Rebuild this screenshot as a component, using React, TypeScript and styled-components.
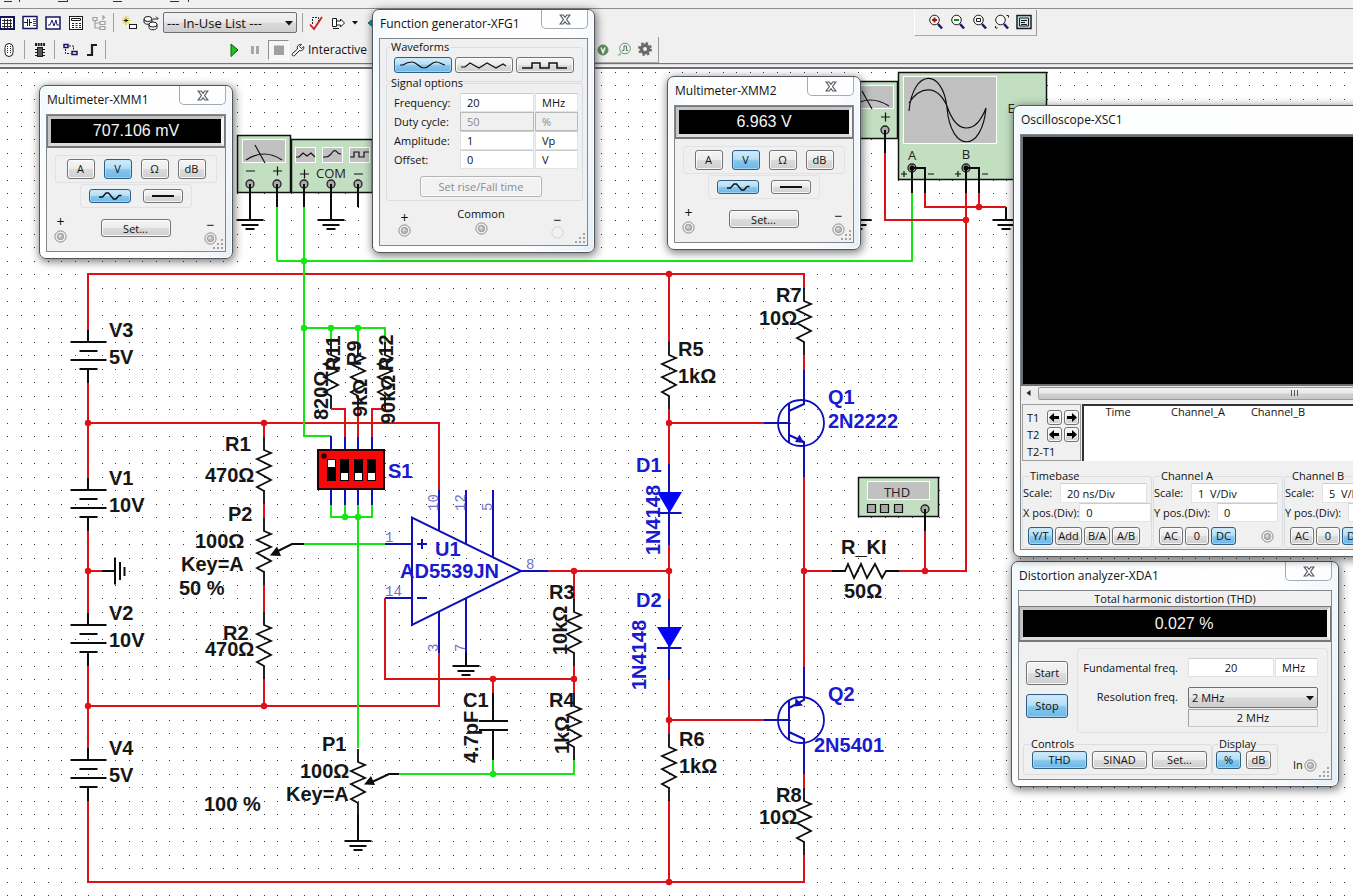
import React from 'react';
import styled, { createGlobalStyle, css } from 'styled-components';

const GlobalStyle = createGlobalStyle`
  *, *::before, *::after { box-sizing: border-box; }
  html, body, #root { height: 100%; margin: 0; }
  body { overflow: hidden; background: #f0f0f0; color: #111; font-family: "Open Sans", "Noto Sans", sans-serif; font-size: 11px; line-height: 14px; }
  button, input, select { font: inherit; color: inherit; }
`;

const RED = '#dd1216';
const GREEN = '#14e614';
const BLUE = '#1010b8';
const LABEL_BLUE = '#1a1ad0';
const INK = '#0c0c0c';

/* ---------- page frame ---------- */

const Desktop = styled.div`
  position: relative;
  display: flex;
  flex-direction: column;
  height: 100vh;
  min-width: 0;
  overflow: hidden;
`;

const MenuEdge = styled.div`
  height: 9px;
  flex: none;
  background: #f1f1f1;
  border-bottom: 1px solid #8e8e8e;
  svg { display: block; }
`;

const ToolArea = styled.header`
  flex: none;
  display: flex;
  flex-direction: column;
  height: 60px;
  border-bottom: 2px solid #6e6e74;
  background: #f0f0f0;
`;

const ToolRow = styled.div`
  display: flex;
  align-items: center;
  height: 27px;
  flex: none;
`;

const ToolRule = styled.div`
  height: 2px;
  background: #73737a;
  border-bottom: 1px solid #d8d8d8;
`;

const ToolGroup = styled.div<{ $start?: number; $gap?: number; $boxed?: boolean; $pad?: string }>`
  display: flex;
  align-items: center;
  gap: ${p => p.$gap ?? 7}px;
  height: 26px;
  flex: none;
  margin-left: ${p => p.$start ?? 0}px;
  padding: ${p => p.$pad ?? '0'};
  ${p => p.$boxed && css`
    border-right: 1px solid #9a9a9a;
    border-bottom: 1px solid #a8a8a8;
    border-left: 1px solid #fff;
  `}
`;

const ToolButton = styled.button<{ $pressed?: boolean; $w?: number }>`
  display: flex;
  align-items: center;
  justify-content: center;
  width: ${p => p.$w ?? 16}px;
  height: 20px;
  flex: none;
  padding: 0;
  border: 0;
  background: none;
  svg { flex: none; }
  ${p => p.$pressed && css`
    border: 1px solid #8d8d8d;
    border-right-color: #fff;
    border-bottom-color: #fff;
    background: #f6f6f6;
  `}
`;

const Divider = styled.span<{ $mx?: number }>`
  width: 1px;
  height: 19px;
  flex: none;
  margin: 0 ${p => p.$mx ?? 6}px;
  background: #a0a0a0;
`;

const SelectBox = styled.span<{ $w: number; $h: number; $size?: number }>`
  position: relative;
  display: inline-flex;
  flex: none;
  width: ${p => p.$w}px;
  height: ${p => p.$h}px;
  select {
    appearance: none;
    width: 100%;
    height: 100%;
    padding: 0 3px;
    border: 1px solid #707070;
    border-radius: 2px;
    background: linear-gradient(#f2f2f2, #ebebeb 48%, #dadada 52%, #cfcfcf);
    font-size: ${p => p.$size ?? 11}px;
  }
  svg { position: absolute; right: 4px; top: 50%; margin-top: -2px; pointer-events: none; }
`;

const RunLabel = styled.button`
  display: flex;
  align-items: center;
  gap: 3px;
  padding: 0;
  border: 0;
  background: none;
  font-size: 12px;
`;

const Workspace = styled.main`
  flex: 1;
  min-height: 0;
  background: #fff;
  overflow: hidden;
  svg { display: block; width: 100%; height: 100%; }
`;

/* ---------- instrument windows ---------- */

const Frame = styled.section<{ $x: number; $y: number; $w: number }>`
  position: absolute;
  left: ${p => p.$x}px;
  top: ${p => p.$y}px;
  width: ${p => p.$w}px;
  padding: 0 6px 6px;
  border: 1px solid #50565c;
  border-radius: 7px;
  background: linear-gradient(100deg, #f0f9fd 0, #fdfefe 12%, #ffffff 70%, #f1f6fb 92%, #e2eef5);
  box-shadow: inset 0 0 0 1px #fff, 1px 2px 9px 1px rgba(0, 0, 0, 0.5);
`;

const TitleBar = styled.header`
  display: flex;
  justify-content: space-between;
  align-items: flex-start;
  height: 28px;
  h2 { margin: 0; padding: 5px 0 0 1px; font-size: 12px; line-height: 18px; font-weight: 400; white-space: nowrap; }
`;

const CloseButton = styled.button`
  display: flex;
  align-items: center;
  justify-content: center;
  width: 47px;
  height: 19px;
  padding: 0;
  border: 1px solid #a3abb5;
  border-top: 0;
  border-radius: 0 0 5px 5px;
  background: rgba(255, 255, 255, 0.75);
`;

const Body = styled.div<{ $h: number }>`
  position: relative;
  height: ${p => p.$h}px;
  border: 1px solid #83878b;
  background: #f0f0f0;
  overflow: hidden;
`;

const Readout = styled.output<{ $h: number; $shift?: number }>`
  display: flex;
  align-items: center;
  justify-content: center;
  height: ${p => p.$h}px;
  padding-left: ${p => p.$shift ?? 0}px;
  border: 4px solid #dcdcdc;
  border-top-color: #c4c4c4;
  border-left-color: #c4c4c4;
  border-right-color: #f4f4f4;
  outline: 1px solid #77777c;
  outline-offset: -1px;
  box-shadow: 0 1px 0 #77777c;
  background: #000;
  color: #f4f4f4;
  font: 16px "Liberation Sans", Arial, sans-serif;
`;

const Btn = styled.button<{ $w: number; $h: number; $on?: boolean }>`
  display: flex;
  align-items: center;
  justify-content: center;
  flex: none;
  width: ${p => p.$w}px;
  height: ${p => p.$h}px;
  padding: 0;
  border: 1px solid ${p => (p.$on ? '#2f5f85' : '#747474')};
  border-radius: 3px;
  background: ${p => (p.$on
    ? 'linear-gradient(#d3ebf9, #b5def5 45%, #85c6ec 55%, #6db8e6)'
    : 'linear-gradient(#f5f5f5, #ececec 48%, #dcdcdc 52%, #cfcfcf)')};
  box-shadow: inset 0 0 0 1px ${p => (p.$on ? 'rgba(190,228,250,.6)' : 'rgba(255,255,255,.8)')};
  white-space: nowrap;
  &:disabled { color: #8b8b8b; background: #f2f2f2; border-color: #b4b4b4; }
`;

const Group = styled.div<{ $w: number; $h: number; $gap: number; $mt: number }>`
  display: flex;
  align-items: center;
  justify-content: center;
  gap: ${p => p.$gap}px;
  width: ${p => p.$w}px;
  height: ${p => p.$h}px;
  margin: ${p => p.$mt}px auto 0;
  border: 1px solid #dfe2e6;
  border-radius: 3px;
`;

const Field = styled.fieldset<{ $w: number; $h: number; $pad: string; $mt?: number; $indent?: number }>`
  min-width: 0;
  flex: none;
  width: ${p => p.$w}px;
  height: ${p => p.$h}px;
  margin: ${p => p.$mt ?? 0}px 0 0;
  padding: ${p => p.$pad};
  border: 1px solid #d8dde2;
  border-radius: 3px;
  legend { height: 14px; line-height: 14px; margin-left: ${p => p.$indent ?? 3}px; padding: 0 1px; }
`;

const Line = styled.div<{ $gap?: number; $mt?: number; $indent?: number }>`
  display: flex;
  align-items: center;
  gap: ${p => p.$gap ?? 0}px;
  margin-top: ${p => p.$mt ?? 0}px;
  padding-left: ${p => p.$indent ?? 0}px;
`;

const TextBox = styled.input<{ $center?: boolean }>`
  width: 100%;
  min-width: 0;
  height: 100%;
  padding: 0 6px;
  border: 1px solid #e3e3e3;
  border-top-color: #c9ccd0;
  background: #fff;
  text-align: ${p => (p.$center ? 'center' : 'left')};
  &:disabled { color: #8a8a8a; background: #f0f0f0; border-color: #b9b9b9; }
`;

const OptionRow = styled.div`
  display: grid;
  grid-template-columns: 65px 74px 43px;
  column-gap: 1px;
  height: 19px;
  align-items: center;
`;

const Jacks = styled.div<{ $pad: string }>`
  display: flex;
  justify-content: space-between;
  align-items: flex-start;
  padding: ${p => p.$pad};
`;

const JackCol = styled.div<{ $mt?: number; $gap?: number }>`
  display: flex;
  flex-direction: column;
  align-items: center;
  gap: ${p => p.$gap ?? 0}px;
  margin-top: ${p => p.$mt ?? 0}px;
  line-height: 13px;
  svg { display: block; }
`;

const Sign = styled.span`
  font-size: 14px;
`;

const GripMark = styled.svg`
  position: absolute;
  right: 1px;
  bottom: 1px;
`;

const Caption = styled.div`
  height: 15px;
  line-height: 16px;
  text-align: center;
`;

const Split = styled.div`
  display: flex;
  align-items: flex-start;
  padding: 7px 3px 0 7px;
  gap: 9px;
`;

const Stack = styled.div`
  display: flex;
  flex-direction: column;
  gap: 9px;
  padding-top: 13px;
`;

const FreqGrid = styled.div`
  flex: 1;
  height: 85px;
  display: grid;
  grid-template-columns: 1fr 130px;
  grid-template-rows: 29px 22px 18px;
  column-gap: 10px;
  align-items: start;
  padding: 9px 9px 0 0;
  border: 1px solid #dfe2e6;
  border-radius: 3px;
  label { text-align: right; line-height: 19px; }
`;

const FreqPair = styled.div`
  display: grid;
  grid-template-columns: 86px 43px;
  column-gap: 1px;
  height: 19px;
`;

const Resolved = styled.output`
  grid-column: 2;
  height: 18px;
  line-height: 16px;
  border: 1px solid #c8c8c8;
  border-top-color: #a3a3a3;
  border-left-color: #a3a3a3;
  text-align: center;
`;

const FieldRow = styled.div`
  display: flex;
  align-items: flex-start;
  padding: 4px 0 0 4px;
`;

const InPort = styled.div`
  display: flex;
  align-items: center;
  gap: 1px;
  margin: 21px 0 0 15px;
`;

/* ---------- oscilloscope ---------- */

const Screen = styled.div`
  height: 251px;
  border: 2px solid #6c6f73;
  background: #000;
`;

const ScrollTrack = styled.div`
  display: flex;
  align-items: center;
  gap: 7px;
  height: 14px;
  padding-left: 5px;
  background: #ececec;
`;

const ScrollThumb = styled.div`
  display: flex;
  align-items: center;
  justify-content: center;
  width: 513px;
  height: 13px;
  border: 1px solid #9a9a9a;
  border-radius: 2px;
  background: linear-gradient(#f5f5f5, #e6e6e6 48%, #d2d2d2 52%, #c6c6c6);
`;

const CursorRow = styled.div`
  display: flex;
  gap: 1px;
  height: 57px;
  margin: 4px 0 0 1px;
`;

const CursorPanel = styled.div`
  width: 59px;
  flex: none;
  display: grid;
  grid-template-columns: 18px 15px 15px;
  grid-template-rows: 17px 17px 17px;
  column-gap: 2px;
  align-items: center;
  padding: 4px 0 0 4px;
  border: 1px solid #9c9c9c;
  span:last-child { grid-column: 1 / 4; }
`;

const ReadingsPane = styled.div`
  flex: 1;
  background: #fff;
  border-top: 2px solid #333;
  border-left: 2px solid #333;
`;

const Readings = styled.table`
  border-collapse: collapse;
  table-layout: fixed;
  width: 228px;
  th { padding: 0; height: 12px; line-height: 12px; font-weight: 400; text-align: center; }
`;

const ScopeSettings = styled.div`
  display: flex;
  gap: 1px;
  padding: 8px 0 0 1px;
`;

const ScopeLine = styled.div<{ $h: number; $w: number }>`
  display: flex;
  align-items: center;
  justify-content: space-between;
  height: ${p => p.$h}px;
  white-space: nowrap;
  input { width: ${p => p.$w}px; flex: none; }
`;

const ChannelButtons = styled.div`
  display: flex;
  align-items: center;
  gap: 2px;
  margin: 5px 0 0 5px;
  > svg { margin-left: auto; margin-right: 4px; }
`;

/* ---------- small drawings ---------- */

const Caret = () => (
  <svg width="8" height="5" viewBox="0 0 8 5"><path d="M0 0h8L4 4.6z" fill="#111" /></svg>
);

const Jack = ({ faint }: { faint?: boolean }) => (
  <svg width="13" height="13" viewBox="0 0 13 13">
    <circle cx="6.5" cy="6.5" r="5.6" fill="#f2f2f2" stroke={faint ? '#d0d0d0' : '#8a8a8a'} />
    {!faint && <circle cx="6.5" cy="6.5" r="3.2" fill="#b9b9b9" stroke="#8c8c8c" strokeWidth=".8" />}
    {!faint && <circle cx="5.8" cy="5.8" r="1.4" fill="#dcdcdc" />}
  </svg>
);

const Grip = () => (
  <GripMark width="12" height="12" viewBox="0 0 12 12" fill="#a3a3a3">
    <path d="M9 1h2v2H9zM5 5h2v2H5zM9 5h2v2H9zM1 9h2v2H1zM5 9h2v2H5zM9 9h2v2H9z" />
  </GripMark>
);

const CloseMark = () => (
  <svg width="12" height="11" viewBox="0 0 12 11" fill="none">
    <path d="M1.2 1h3L6 3.3 7.8 1h3L7.6 5.500l3.200 4.500h-3L6 7.700 4.200 10h-3l3.200-4.500z" fill="#fff" stroke="#565c66" strokeWidth="1.200" />
  </svg>
);

const Sine = () => (
  <svg width="26" height="10" viewBox="0 0 26 10" fill="none" stroke="#111" strokeWidth="1.400">
    <path d="M2 6h3.500L9 2h2.500l5 6H19l3-3.500h2.500" />
  </svg>
);

interface WindowProps { id: string; title: string; x: number; y: number; w: number; h: number; closable?: boolean; children: React.ReactNode }

const InstrumentWindow = ({ id, title, x, y, w, h, closable = true, children }: WindowProps) => (
  <Frame $x={x} $y={y} $w={w} aria-labelledby={id}>
    <TitleBar>
      <h2 id={id}>{title}</h2>
      {closable && <CloseButton type="button" aria-label="Close"><CloseMark /></CloseButton>}
    </TitleBar>
    <Body $h={h}>{children}</Body>
  </Frame>
);

const Multimeter = ({ name, value, x, y }: { name: string; value: string; x: number; y: number }) => (
  <InstrumentWindow id={name} title={`Multimeter-${name}`} x={x} y={y} w={194} h={138}>
    <Readout $h={32}>{value}</Readout>
    <Group $w={162} $h={28} $gap={9} $mt={8}>
      {['A', 'V', 'Ω', 'dB'].map(u => <Btn key={u} type="button" $w={28} $h={20} $on={u === 'V'}>{u}</Btn>)}
    </Group>
    <Group $w={112} $h={24} $gap={12} $mt={1}>
      <Btn type="button" $w={42} $h={14} $on aria-label="AC"><Sine /></Btn>
      <Btn type="button" $w={40} $h={14} aria-label="DC">
        <svg width="22" height="2"><path d="M0 1h22" stroke="#111" strokeWidth="2" /></svg>
      </Btn>
    </Group>
    <Jacks $pad="7px 8px 0 7px">
      <JackCol $gap={2}><Sign>+</Sign><Jack /></JackCol>
      <JackCol $mt={4}><Btn type="button" $w={70} $h={18}>Set...</Btn></JackCol>
      <JackCol $mt={3} $gap={1}><Sign>−</Sign><Jack /></JackCol>
    </Jacks>
    <Grip />
  </InstrumentWindow>
);

const signalRows = [
  { label: 'Frequency:', value: '20', unit: 'MHz' },
  { label: 'Duty cycle:', value: '50', unit: '%', off: true },
  { label: 'Amplitude:', value: '1', unit: 'Vp' },
  { label: 'Offset:', value: '0', unit: 'V' },
];

const SignalPanel = styled.div`
  padding: 1px 5px 0 6px;
`;

const FunctionGenerator = () => (
  <InstrumentWindow id="XFG1" title="Function generator-XFG1" x={372} y={9} w={223} h={208}>
    <SignalPanel>
      <Field $w={197} $h={42} $pad="3px 7px 0" $indent={-4}>
        <legend>Waveforms</legend>
        <Line $gap={3}>
          <Btn type="button" $w={58} $h={16} $on aria-label="Sine">
            <svg width="46" height="8" fill="none" stroke="#111" strokeWidth="1.200"><path d="M0 4h3C7 1 9 1 12 1c5 0 7 6 12 6 5 0 7-6 12-6 4 0 5 2 9 3" /></svg>
          </Btn>
          <Btn type="button" $w={58} $h={16} aria-label="Triangle">
            <svg width="46" height="8" fill="none" stroke="#111" strokeWidth="1.200"><path d="M0 6h4l5-4 9 5 8-5 9 5 7-4 3 2" /></svg>
          </Btn>
          <Btn type="button" $w={58} $h={16} aria-label="Square">
            <svg width="46" height="9" fill="none" stroke="#111" strokeWidth="1.500"><path d="M0 7h10V2h8v5h9V2h8v5h10" /></svg>
          </Btn>
        </Line>
      </Field>
      <Field $w={197} $h={125} $pad="3px 7px 0" $mt={-6} $indent={-4}>
        <legend>Signal options</legend>
        {signalRows.map(r => (
          <OptionRow key={r.label}>
            <label htmlFor={`fg-${r.unit}`}>{r.label}</label>
            <TextBox id={`fg-${r.unit}`} defaultValue={r.value} disabled={r.off} />
            <TextBox aria-label={`${r.label} unit`} defaultValue={r.unit} disabled={r.off} />
          </OptionRow>
        ))}
        <Line $mt={7} $indent={26}>
          <Btn type="button" $w={122} $h={21} disabled>Set rise/Fall time</Btn>
        </Line>
      </Field>
    </SignalPanel>
    <Jacks $pad="6px 23px 0 18px">
      <JackCol $mt={4}><Sign>+</Sign><Jack /></JackCol>
      <JackCol $gap={2}>Common<Jack /></JackCol>
      <JackCol $mt={6}><Sign>−</Sign><Jack faint /></JackCol>
    </Jacks>
    <Grip />
  </InstrumentWindow>
);

const DistortionAnalyzer = () => (
  <InstrumentWindow id="XDA1" title="Distortion analyzer-XDA1" x={1011} y={561} w={328} h={190}>
    <Caption>Total harmonic distortion (THD)</Caption>
    <Readout $h={35} $shift={18}>0.027 %</Readout>
    <Split>
      <Stack>
        <Btn type="button" $w={42} $h={24}>Start</Btn>
        <Btn type="button" $w={42} $h={24} $on>Stop</Btn>
      </Stack>
      <FreqGrid>
        <label htmlFor="fund">Fundamental freq.</label>
        <FreqPair>
          <TextBox id="fund" $center defaultValue="20" />
          <TextBox aria-label="Frequency unit" defaultValue="MHz" />
        </FreqPair>
        <label htmlFor="res">Resolution freq.</label>
        <SelectBox $w={130} $h={21}>
          <select id="res"><option>2 MHz</option></select>
          <Caret />
        </SelectBox>
        <Resolved>2 MHz</Resolved>
      </FreqGrid>
    </Split>
    <FieldRow>
      <Field $w={189} $h={38} $pad="0 8px" $indent={-2}>
        <legend>Controls</legend>
        <Line $gap={5}>
          <Btn type="button" $w={55} $h={18} $on>THD</Btn>
          <Btn type="button" $w={55} $h={18}>SINAD</Btn>
          <Btn type="button" $w={55} $h={18}>Set...</Btn>
        </Line>
      </Field>
      <Field $w={66} $h={38} $pad="0 3px" $indent={2}>
        <legend>Display</legend>
        <Line $gap={5}>
          <Btn type="button" $w={25} $h={18} $on>%</Btn>
          <Btn type="button" $w={25} $h={18}>dB</Btn>
        </Line>
      </Field>
      <InPort>In<Jack /></InPort>
    </FieldRow>
    <Grip />
  </InstrumentWindow>
);

const ArrowKey = ({ dir, label }: { dir: 'l' | 'r'; label: string }) => (
  <Btn type="button" $w={15} $h={15} aria-label={label}>
    <svg width="11" height="9" viewBox="0 0 11 9">
      <path d={dir === 'l' ? 'M0 4.500 5 0v3h5v3H5v3z' : 'M11 4.500 6 0v3H1v3h5v3z'} fill="#000" />
    </svg>
  </Btn>
);

const ChannelField = ({ name, scale, axis, buttons, on, jack, posWidth }: {
  name: string; scale: string; axis: string; buttons: [string, number][]; on: string; jack?: boolean; posWidth: number;
}) => (
  <Field $w={130} $h={79} $pad="0 4px 0 0" $indent={6}>
    <legend>{name}</legend>
    <ScopeLine $h={20} $w={87}>
      <label htmlFor={`${name}-scale`}>Scale:</label>
      <TextBox id={`${name}-scale`} defaultValue={scale} />
    </ScopeLine>
    <ScopeLine $h={19} $w={posWidth}>
      <label htmlFor={`${name}-pos`}>{axis} pos.(Div):</label>
      <TextBox id={`${name}-pos`} defaultValue="0" />
    </ScopeLine>
    <ChannelButtons>
      {buttons.map(([t, w]) => <Btn key={t} type="button" $w={w} $h={18} $on={t === on}>{t}</Btn>)}
      {jack && <Jack />}
    </ChannelButtons>
  </Field>
);

const channelKeys: [string, number][] = [['AC', 24], ['0', 24], ['DC', 25]];

const Oscilloscope = () => (
  <InstrumentWindow id="XSC1" title="Oscilloscope-XSC1" x={1013} y={105} w={560} h={416} closable={false}>
    <Screen />
    <ScrollTrack>
      <svg width="5" height="6"><path d="M4.500 0v6L.5 3z" fill="#222" /></svg>
      <ScrollThumb>
        <svg width="9" height="6" stroke="#555"><path d="M1.500 0v6M4.500 0v6M7.500 0v6" /></svg>
      </ScrollThumb>
    </ScrollTrack>
    <CursorRow>
      <CursorPanel>
        <span>T1</span><ArrowKey dir="l" label="T1 back" /><ArrowKey dir="r" label="T1 forward" />
        <span>T2</span><ArrowKey dir="l" label="T2 back" /><ArrowKey dir="r" label="T2 forward" />
        <span>T2-T1</span>
      </CursorPanel>
      <ReadingsPane>
        <Readings>
          <colgroup><col width="68" /><col width="92" /><col width="68" /></colgroup>
          <thead><tr><th>Time</th><th>Channel_A</th><th>Channel_B</th></tr></thead>
        </Readings>
      </ReadingsPane>
    </CursorRow>
    <ScopeSettings>
      <ChannelField name="Timebase" scale="20 ns/Div" axis="X" posWidth={72} buttons={[['Y/T', 25], ['Add', 27], ['B/A', 26], ['A/B', 28]]} on="Y/T" />
      <ChannelField name="Channel A" scale="1  V/Div" axis="Y" posWidth={61} buttons={channelKeys} on="DC" jack />
      <ChannelField name="Channel B" scale="5  V/Div" axis="Y" posWidth={61} buttons={channelKeys} on="DC" jack />
    </ScopeSettings>
  </InstrumentWindow>
);

/* ---------- schematic ---------- */

const W = ({ d, c = INK, w = 2 }: { d: string; c?: string; w?: number }) => (
  <path d={d} stroke={c} strokeWidth={w} fill="none" />
);

const Node = ({ x, y, c = RED }: { x: number; y: number; c?: string }) => <circle cx={x} cy={y} r="3.200" fill={c} />;

const Res = ({ x, y, flat }: { x: number; y: number; flat?: boolean }) => (
  <path
    transform={`translate(${x} ${y})${flat ? ' rotate(-90)' : ''}`}
    d="M0-13V0L7 3-7 9 7 16-7 22 7 30-7 37 0 41V54"
    fill="none" stroke={INK} strokeWidth="1.800"
  />
);

const Battery = ({ y }: { y: number }) => (
  <W d={`M88 ${y - 12}V${y}M70.500 ${y}H106.500M79.500 ${y + 9}H97.500M70.500 ${y + 18}H106.500M79.500 ${y + 27}H97.500M88 ${y + 27}V${y + 41}`} />
);

const Ground = ({ x, y }: { x: number; y: number }) => (
  <W d={`M${x - 13.5} ${y}h27M${x - 8.5} ${y + 5}h17M${x - 4.5} ${y + 9}h9`} />
);

const Port = ({ x, y }: { x: number; y: number }) => (
  <circle cx={x} cy={y} r="4" fill="#a9a9a9" stroke="#222" strokeWidth="1.300" />
);

type Label = [string, number, number, boolean?];

const blackLabels: Label[] = [
  ['V3', 109, 337], ['5V', 109, 364], ['V1', 109, 485], ['10V', 109, 512],
  ['V2', 109, 620], ['10V', 109, 647], ['V4', 109, 755], ['5V', 109, 782],
  ['R1', 225, 451], ['470Ω', 205, 482], ['P2', 228, 521], ['100Ω', 195, 548], ['Key=A', 181, 571],
  ['50 %', 179, 595], ['R2', 223, 640], ['470Ω', 205, 656],
  ['P1', 322, 751], ['100Ω', 300, 778], ['Key=A', 286, 801], ['100 %', 204, 811],
  ['R11', 340, 371, true], ['820Ω', 328, 420, true], ['R9', 361, 366, true], ['9kΩ', 367, 417, true],
  ['R12', 393, 371, true], ['90kΩ', 395, 424, true],
  ['R3', 549, 599], ['10kΩ', 567, 655, true], ['R4', 549, 707], ['1kΩ', 569, 754, true],
  ['C1', 463, 707], ['4.7pF', 478, 763, true],
  ['R5', 678, 356], ['1kΩ', 678, 383], ['R6', 679, 746], ['1kΩ', 679, 773],
  ['R7', 776, 302], ['10Ω', 759, 325], ['R8', 776, 802], ['10Ω', 759, 824],
  ['R_KI', 841, 554], ['50Ω', 844, 598],
];

const blueLabels: Label[] = [
  ['S1', 388, 478], ['U1', 435, 556], ['AD5539JN', 400, 578], ['D1', 636, 472], ['D2', 636, 607],
  ['1N4148', 660, 555, true], ['1N4148', 646, 690, true],
  ['Q1', 828, 404], ['2N2222', 828, 428], ['Q2', 828, 701], ['2N5401', 814, 752],
];

const pinLabels: Label[] = [
  ['1', 385, 542], ['14', 385, 596], ['8', 526, 569],
  ['10', 438, 511, true], ['12', 465, 511, true], ['5', 492, 511, true], ['3', 438, 652, true], ['7', 465, 652, true],
];

const Labels = ({ items, fill }: { items: Label[]; fill: string }) => (
  <g fill={fill}>
    {items.map(([t, x, y, up], i) => (
      <text key={i} transform={`translate(${x} ${y})${up ? ' rotate(-90)' : ''}`}>{t}</text>
    ))}
  </g>
);

const Schematic = () => (
  <svg role="img" aria-label="Amplifier schematic">
    <defs>
      <pattern id="grid" x="7" y="18" width="27" height="27" patternUnits="userSpaceOnUse">
        <path d="M0 0h1v1H0zM14 0h1v1h-1zM0 13h1v1H0zM14 13h1v1h-1z" fill="#333" />
      </pattern>
    </defs>
    <g transform="translate(0 -69)">
      <rect y="69" width="100%" height="100%" fill="url(#grid)" />

      {/* supply rails */}
      <W c={RED} d="M88 330V274H804V289M88 383V478M88 531V613M88 666V748M88 801V882H804V855M88 571H102M88 423H439V490M88 706H439V653" />
      {[342, 490, 625, 760].map(y => <Battery key={y} y={y} />)}
      <W d="M102 571H115M115 557.500V584.500M120 562V580M124.500 567V576" />

      {/* R1 / P2 / R2 divider */}
      <W c={RED} d="M264 423V437M264 504V518M264 585V612M264 678V706" />
      <Res x={264} y={450} /><Res x={264} y={531} /><Res x={264} y={625} />
      <W d="M278 551L292 544H305" />
      <path d="M270 555.500L277 546.500 281 556z" fill={INK} />

      {/* signal path */}
      <W c={GREEN} d="M277 207V261M304 207V436H331M277 261H912V193M304 328H385V342M331 328V342M358 328V342M304 544H385M358 517V748M399 774H574V760M493 774V760M331 505V517H372V505M345 505V517M358 505V517" />
      <W d="M250 185V220M277 185V207M304 185V207M331 185V220M358 185V207" />
      <Res x={331} y={355} /><Res x={358} y={355} /><Res x={385} y={355} />
      <W c={RED} d="M331 409H345V437M358 409V437M385 409H372V437" />
      <W c={BLUE} d="M331 436V450M345 437V450M358 437V450M372 437V450M331 489V505M345 489V505M358 489V505M372 489V505" />
      <rect x="318" y="450" width="66" height="39" fill="#f40808" stroke="#200" strokeWidth="2" />
      <circle cx="324" cy="456" r="2.800" fill="#300" />
      {[327, 340, 354, 367].map((x, i) => (
        <g key={x}>
          <rect x={x} y="459" width="9" height="22" fill="#000" />
          <rect x={x + 1} y={i ? 473 : 460} width="7" height="7" fill="#fff" />
        </g>
      ))}

      {/* op amp */}
      <W c={BLUE} d="M412 517.500V625L521 571zM385 544H412M385 598H412M439 490V530M466 490V544M493 490V557M521 571H548M439 612V653M466 599V653M417 544H427M422 539V549M417 598H427" />
      <W d="M466 653V666" />
      <Ground x={466} y={666} />
      <W c={RED} d="M548 571H669M574 571V600M574 666V693M385 598V679H574M493 679V693" />
      <Res x={574} y={612} /><Res x={574} y={706} />
      <W d="M493 693V721M479 721H508M479 730H508M493 730V760" />

      {/* P1 */}
      <Res x={358} y={762} />
      <W d="M358 815V841M372 782L389 774H399" />
      <Ground x={358} y={841} />
      <path d="M364 784.500L371 776 375 785z" fill={INK} />

      {/* bias string */}
      <W c={RED} d="M669 274V343M669 409V465M669 544V600M669 679V734M669 800V882M669 423H764M669 720H764" />
      <Res x={669} y={355} /><Res x={669} y={747} />
      {[464, 599].map(y => (
        <g key={y}>
          <W c={BLUE} d={`M669 ${y}V${y + 81}M657 ${y + 49}H681.500`} />
          <path d={`M657 ${y + 28}H682L669.500 ${y + 49}z`} fill="#0404f4" />
        </g>
      ))}

      {/* output stage */}
      <W c={RED} d="M804 355V370M804 477V667M804 774V788M804 571H832M898 571H966M925 531V571" />
      <Res x={804} y={301} /><Res x={804} y={801} />
      <Res x={845} y={571} flat />
      <W c={BLUE} d="M764 423H789M804 370V404L789 411M789 435L804 442V477" />
      <W c={BLUE} d="M789 404V443M789 701V740" />
      <circle cx="801" cy="423" r="23" fill="none" stroke={BLUE} strokeWidth="1.800" />
      <path d="M804 443L795 442 799.500 434.500z" fill={BLUE} />
      <W c={BLUE} d="M764 720H789M804 667V700L789 708M789 732L804 739V774" />
      <circle cx="801" cy="720" r="23" fill="none" stroke={BLUE} strokeWidth="1.800" />
      <path d="M795 706.500L795.500 698 803 705.500z" fill={BLUE} />

      {/* instrument symbols */}
      <g fill="#c2dfc2" stroke="#111" strokeWidth="1.500">
        <rect x="237.500" y="135.500" width="53" height="57" />
        <rect x="291.500" y="139.500" width="81" height="53" />
        <rect x="844.500" y="81.500" width="53" height="57" />
        <rect x="898.500" y="72.500" width="148" height="107" />
        <rect x="858.500" y="477.500" width="80" height="39" />
      </g>
      <g fill="#c1c1c1" stroke="#fff" strokeWidth="1">
        <rect x="242.500" y="139.500" width="43" height="23" />
        <rect x="295.500" y="147.500" width="20" height="15" />
        <rect x="322.500" y="147.500" width="20" height="15" />
        <rect x="349.500" y="147.500" width="20" height="15" />
        <rect x="849.500" y="85.500" width="44" height="23" />
        <rect x="903.500" y="76.500" width="93" height="67" />
        <rect x="867.500" y="481.500" width="62" height="18" />
      </g>
      <g fill="none" stroke="#111" strokeWidth="1.200">
        <path d="M246 160Q264 148 282 160M255 145L265 163M853 106Q870 94 889 106M862 91L872 109" />
        <path d="M296 157h3l4-4 4 3 4-3 4 4M323 157h3c3 0 4-2 5-3 2-3 4-5 6-2 1 2 2 2 4 2M350 157h4v-5h5v5h5v-5h5" />
        <path d="M909 111C913 68 943 68 947 108C951 153 982 153 986 108M909 103C920 86 937 84 947 106C957 136 976 134 986 108" />
        <path d="M246 171h9M273 171h9M277.500 166.500v9M300 174h9M304.500 169.500v9M354 174h9M881 117h9M885.500 112.500v9M928 174h6M982 174h6M901 174h6M904 171v6M955 174h6M958 171v6" />
        <path d="M867.500 504.500h8v8h-8zM880.500 504.500h8v8h-8zM894.500 504.500h8v8h-8z" fill="#a9a9a9" />
      </g>
      <Port x={250} y={184} /><Port x={277} y={184} /><Port x={304} y={184} /><Port x={331} y={184} /><Port x={358} y={184} />
      <Port x={885} y={130} /><Port x={912} y={168} /><Port x={966} y={168} /><Port x={925} y={509} />
      <circle cx="912" cy="168" r="2.500" /><circle cx="966" cy="168" r="2.500" />
      <Ground x={250} y={220} /><Ground x={331} y={220} /><Ground x={858} y={220} /><Ground x={1006} y={220} />

      {/* probe wiring */}
      <W d="M250 184V200M277 184V200M304 184V200M331 184V200M358 184V200M885 130V153M912 168V193M912 168H925V193M966 168V193M966 168H979V193M1006 207V220M925 509V531" />
      <W c={RED} d="M885 153V220H966M966 193V571M925 193V207H1006M979 193V207" />

      {[[88, 423], [88, 571], [88, 706], [264, 423], [264, 706], [574, 571], [669, 571], [574, 679], [493, 679], [669, 274],
        [669, 423], [669, 720], [669, 882], [804, 571], [925, 571], [966, 220], [979, 207]].map(([x, y]) => <Node key={`${x}-${y}`} x={x} y={y} />)}
      {[[304, 261], [304, 328], [331, 328], [358, 328], [345, 517], [358, 517], [493, 774]].map(([x, y]) => (
        <Node key={`${x}-${y}`} x={x} y={y} c={GREEN} />
      ))}

      <g fontFamily='"Liberation Sans", Arial, sans-serif' fontSize="20" fontWeight="700">
        <Labels items={blackLabels} fill="#161616" />
        <Labels items={blueLabels} fill={LABEL_BLUE} />
      </g>
      <g fontFamily='"Liberation Mono", monospace' fontSize="14">
        <Labels items={pinLabels} fill="#7070c4" />
      </g>
      <g fontFamily='"Open Sans", sans-serif' fontSize="13" fill="#222" textAnchor="middle">
        <text x="331" y="178">COM</text>
        <text x="897" y="497">THD</text>
        <text x="912" y="160">A</text>
        <text x="966" y="159">B</text>
        <text x="1011" y="113">E</text>
      </g>
    </g>
  </svg>
);

/* ---------- toolbar glyphs ---------- */

const G = ({ children }: { children: React.ReactNode }) => (
  <svg width="16" height="16" viewBox="0 0 16 16" fill="none" stroke="#1c1c1c">{children}</svg>
);

const lens = <><circle cx="6.500" cy="6" r="4.800" fill="#f7f7f7" /><path d="M10 10l4 4.500" stroke="#1c1c70" strokeWidth="2.600" /></>;

const Toolbars = () => (
  <ToolArea>
    <ToolRow>
      <ToolGroup $start={-1}>
        <ToolButton aria-label="Grid"><G><rect x="1" y="2" width="14" height="12" fill="#fff" stroke="#14145a" strokeWidth="2" /><path d="M3 5.500h10M3 8.500h10M3 11.500h10M5.500 4v9M8.500 4v9M11.500 4v9" strokeWidth=".9" /></G></ToolButton>
        <ToolButton aria-label="Components"><G><rect x="1" y="1.500" width="14" height="12" fill="#fff" stroke="#14145a" strokeWidth="1.500" /><path d="M2 7.500h3M5.500 4v7M7.500 4v7M8 7.500h2" /><path d="M11 4.500h3M11 6.500h3M11 8.500h3M11 10.500h3" stroke="#a02020" /></G></ToolButton>
        <ToolButton aria-label="Grapher"><G><rect x="1" y="2" width="14" height="12" fill="#fff" stroke="#14145a" strokeWidth="1.500" /><path d="M3 10h2l2-5 2 6 2-6 1 5h2" stroke="#1c1c70" /></G></ToolButton>
        <ToolButton aria-label="Calculator"><G><rect x="1.500" y="1.500" width="13" height="13" fill="#fff" /><path d="M3.500 3.500h9v2h-9z" /><path d="M4 8.500h9M4 10.500h9M4 12.500h9" strokeDasharray="2 1.500" /></G></ToolButton>
        <ToolButton aria-label="Parent sheet" disabled><G><path d="M2 2.500h4v3H2zM9 6.500h5v3H9zM9 11.500h5v3H9zM4 6v7h5M4 8h5M12 5V1l2 2" stroke="#a0a0a0" strokeWidth="1.200" /></G></ToolButton>
      </ToolGroup>
      <Divider />
      <ToolGroup $start={1} $gap={6}>
        <ToolButton aria-label="Create component"><G><path d="M5 1v9M1 5.500h8M2 2.500l6 6M8 2.500l-6 6" stroke="#c8b400" /><path d="M5 4v3M3 5.500h4" /><rect x="8.500" y="9.500" width="7" height="4" fill="#fff" /></G></ToolButton>
        <ToolButton aria-label="Database manager"><G><ellipse cx="5" cy="4" rx="4" ry="2.500" fill="#fff" /><path d="M1 4v3c0 3 8 3 8 0V4" /><ellipse cx="10" cy="9.500" rx="4" ry="2.500" fill="#fff" /><path d="M6 9.500v3c0 3 8 3 8 0v-3M10 4h5M13 1.500L15.500 4" /></G></ToolButton>
      </ToolGroup>
      <ToolGroup $start={4}>
        <SelectBox $w={134} $h={21} $size={13}>
          <select aria-label="In-use list"><option>--- In-Use List ---</option></select>
          <Caret />
        </SelectBox>
      </ToolGroup>
      <Divider $mx={5} />
      <ToolGroup $gap={6}>
        <ToolButton aria-label="Rules check"><G><path d="M4.500 9V2.500h6V6" strokeDasharray="2 1" /><path d="M2 9.500l4 4.500 8-12" stroke="#cc1c1c" strokeWidth="1.800" /></G></ToolButton>
        <ToolButton aria-label="Transfer"><G><path d="M2.500 3.500h4v8h-4zM6.500 6h4V4l4 4-4 4v-2h-4" fill="#fff" /><path d="M3 13.500h6" /></G></ToolButton>
        <ToolButton $w={6} aria-label="Transfer options"><svg width="6" height="4"><path d="M0 0h6L3 3.500z" fill="#111" /></svg></ToolButton>
        <ToolButton aria-label="Back annotate"><G><path d="M4 8l5-4v8z" fill="#0d9a9a" stroke="#0d6a6a" /></G></ToolButton>
      </ToolGroup>
      <ToolGroup $start={534} $gap={6} $boxed $pad="0 4px 0 13px">
        <ToolButton aria-label="Zoom in"><G>{lens}<path d="M4 6h5M6.500 3.500v5" stroke="#a01818" strokeWidth="2" /></G></ToolButton>
        <ToolButton aria-label="Zoom out"><G>{lens}<path d="M4 6h5" stroke="#188a18" strokeWidth="2" /></G></ToolButton>
        <ToolButton aria-label="Zoom area"><G>{lens}<path d="M4.500 4.500h4v3h-4z" /></G></ToolButton>
        <ToolButton aria-label="Zoom fit"><G>{lens}<path d="M12.500 1.500h2v2M1.500 12v2h2" /></G></ToolButton>
        <ToolButton aria-label="Full screen"><G><rect x="1" y="1.500" width="14" height="13" fill="#c9e6ec" strokeWidth="1.500" /><path d="M3.500 4h9v8h-9zM5 6.500h6M5 8.500h4M5 10.500h6" /></G></ToolButton>
      </ToolGroup>
    </ToolRow>
    <ToolRow>
      <ToolGroup $start={1}>
        <ToolButton aria-label="Connector"><G><rect x="4" y="1.500" width="8" height="13" rx="4" fill="#fff" /><path d="M6.500 4v8M9.500 4v8" strokeDasharray="1 1" /></G></ToolButton>
      </ToolGroup>
      <Divider $mx={7} />
      <ToolButton aria-label="MCU"><G><path d="M3 2.500h10" strokeWidth="3" strokeDasharray="2 .7" /><rect x="5.500" y="5.500" width="5" height="9" fill="#555" /><path d="M3 7.500h2M3 10.500h2M3 13.500h2M11 7.500h2M11 10.500h2M11 13.500h2" /></G></ToolButton>
      <Divider $mx={6} />
      <ToolGroup $start={1} $gap={6}>
        <ToolButton aria-label="Hierarchical block"><G><rect x="2" y="2.500" width="4" height="3" fill="#fff" stroke="#14145a" strokeWidth="1.500" /><rect x="10" y="9.500" width="5" height="3" fill="#fff" stroke="#14145a" strokeWidth="1.500" /><path d="M3.500 7v4.500h5M7 4h4.500v4" strokeDasharray="2 1" /></G></ToolButton>
        <ToolButton aria-label="Bus"><G><path d="M3 13h5V3h5" strokeWidth="2.200" /></G></ToolButton>
      </ToolGroup>
      <Divider $mx={5} />
      <ToolGroup $start={115} $gap={5}>
        <ToolButton aria-label="Run"><G><path d="M5 2l7 6-7 6.500z" fill="#18c818" stroke="#0c5a0c" /></G></ToolButton>
        <ToolButton aria-label="Pause"><G><path d="M5.500 4v8M10.500 4v8" stroke="#a6a6a6" strokeWidth="3" /></G></ToolButton>
        <ToolButton $pressed $w={21} aria-label="Stop"><G><path d="M3 3.500h10v9.500H3z" fill="#a0a0a0" stroke="none" /></G></ToolButton>
      </ToolGroup>
      <ToolGroup $start={2}>
        <RunLabel type="button">
          <svg width="14" height="14" viewBox="0 0 14 14" fill="#fff" stroke="#1c1c1c"><path d="M1.500 10.500L6.500 6C5.500 3 8 .8 10.500 1.500L8.500 3.600l2 2 2.200-2c.6 2.600-1.500 4.900-4.300 4L3.500 12.600c-1.500 1-3-.6-2-2.100z" /></svg>
          Interactive
        </RunLabel>
      </ToolGroup>
      <ToolGroup $start={227} $gap={5} $boxed $pad="0 5px 0 0">
        <ToolButton aria-label="Voltage probe"><G><circle cx="8" cy="9" r="5" fill="#5e8a5e" stroke="#5e8a5e" /><path d="M6 6.500l2 5 2-5" stroke="#fff" strokeWidth="1.500" /></G></ToolButton>
        <ToolButton aria-label="Digital probe"><G><circle cx="9" cy="7.500" r="5.300" stroke="#6f9a6f" /><path d="M6 9.500h2V5h2.500v4.500H12" stroke="#557a55" /><path d="M1 14.500L5 11v3.500z" fill="#9fbf9f" stroke="none" /></G></ToolButton>
        <ToolButton aria-label="Probe settings"><G><circle cx="8" cy="8" r="3.700" stroke="#6a6a6a" strokeWidth="3.400" /><circle cx="8" cy="8" r="6" stroke="#6a6a6a" strokeWidth="2" strokeDasharray="2.400 2.310" /></G></ToolButton>
      </ToolGroup>
    </ToolRow>
    <ToolRule />
  </ToolArea>
);

export default function App() {
  return (
    <Desktop>
      <GlobalStyle />
      <MenuEdge>
        <svg width="200" height="8" fill="#333">
          <path d="M4 1h8v1H4zM58 1h9v1h-9zM113 1h9v1h-9zM170 1h9v1h-9zM19 0h1v2h-1zM67 0h1v2h-1zM188 0h1v2h-1z" />
        </svg>
      </MenuEdge>
      <Toolbars />
      <Workspace><Schematic /></Workspace>
      <FunctionGenerator />
      <Multimeter name="XMM1" value="707.106 mV" x={39} y={85} />
      <Multimeter name="XMM2" value="6.963 V" x={667} y={76} />
      <DistortionAnalyzer />
      <Oscilloscope />
    </Desktop>
  );
}
